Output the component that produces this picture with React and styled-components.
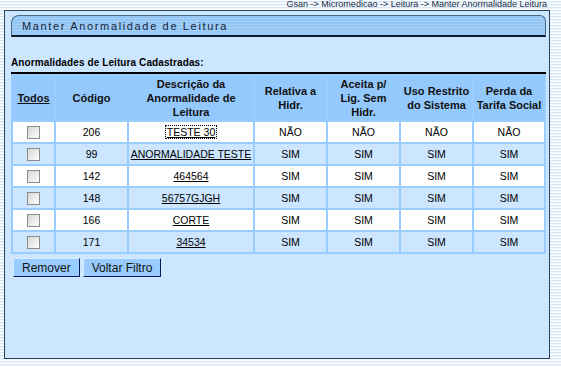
import React from "react";
import styled, { createGlobalStyle } from "styled-components";

const GlobalStyle = createGlobalStyle`
  html, body {
    margin: 0;
    padding: 0;
  }
  body {
    font-family: "Liberation Sans", Arial, sans-serif;
    background: repeating-linear-gradient(
      to bottom,
      #ffffff 0px,
      #ffffff 1px,
      #d3e6f7 1px,
      #d3e6f7 2px,
      #eef5fc 2px,
      #eef5fc 3px
    );
    min-height: 367px;
  }
`;

const Page = styled.div`
  width: 561px;
  height: 367px;
  display: flex;
  flex-direction: column;
`;

const Breadcrumb = styled.div`
  height: 10px;
  line-height: 9px;
  font-size: 9px;
  color: #1c2d44;
  text-align: right;
  padding-right: 14px;
  white-space: nowrap;
  overflow: hidden;
`;

const Panel = styled.div`
  margin-left: 4px;
  width: 546px;
  height: 349px;
  border: 1px solid #2a445e;
  background: #cce6ff;
  padding: 4px 5px 0 6px;
  box-sizing: border-box;
  display: flex;
  flex-direction: column;
  align-items: flex-start;
`;

const TitleBar = styled.div`
  width: 535px;
  height: 22px;
  box-sizing: border-box;
  border: 1px solid #48698a;
  border-bottom: 2px solid #0e1c2a;
  border-radius: 8px 6px 0 0;
  background: repeating-linear-gradient(
    to bottom,
    #93c5f5 0px,
    #93c5f5 2px,
    #a7d0f7 2px,
    #a7d0f7 3px
  );
  display: flex;
  align-items: center;
  padding-left: 10px;
`;

const TitleText = styled.span`
  font-size: 11px;
  letter-spacing: 1.65px;
  color: #16263a;
`;

const SectionLabel = styled.div`
  margin-top: 20px;
  font-size: 10px;
  font-weight: bold;
  letter-spacing: 0.1px;
  line-height: 12px;
  color: #000;
`;

const Rule = styled.div`
  margin-top: 3px;
  width: 535px;
  height: 2px;
  background: #000;
`;

const Table = styled.table`
  width: 535px;
  border-collapse: separate;
  border-spacing: 2px;
  background: #99ccff;
  table-layout: fixed;
  font-size: 10.5px;
`;

const HeadCell = styled.th`
  height: 44px;
  padding: 0;
  background: #94c9fd;
  font-weight: bold;
  font-size: 11px;
  line-height: 14px;
  color: #111;
  text-align: center;
  vertical-align: middle;
  white-space: nowrap;
  text-decoration: ${(p) => (p.$link ? "underline" : "none")};
`;

const Row = styled.tr`
  background: ${(p) => (p.$alt ? "#cce6ff" : "#ffffff")};
`;

const Cell = styled.td`
  height: 20px;
  padding: 0;
  text-align: center;
  vertical-align: middle;
  white-space: nowrap;
  color: #000;
`;

const Check = styled.span`
  display: inline-block;
  width: 11px;
  height: 11px;
  border: 1px solid #8c8c8c;
  background: linear-gradient(135deg, #d6d6d6 0%, #f2f2f2 70%, #fbfbfb 100%);
  vertical-align: middle;
`;

const DescLink = styled.a`
  color: #000;
  text-decoration: underline;
  outline: ${(p) => (p.$focused ? "1px dotted #000" : "none")};
  outline-offset: 0px;
  padding: 0 1px;
`;

const Actions = styled.div`
  margin-top: 4px;
  margin-left: 2px;
  display: flex;
  gap: 3px;
`;

const Button = styled.button`
  height: 19px;
  padding: 0 8px;
  font-family: "Liberation Sans", Arial, sans-serif;
  font-size: 12px;
  color: #111;
  background: #99ccff;
  border: 1px solid;
  border-color: #d9ecff #0b1a5c #0b1a5c #d9ecff;
  line-height: 16px;
  cursor: pointer;
`;

const rows = [
  { code: 206, desc: "TESTE 30", vals: ["NÃO", "NÃO", "NÃO", "NÃO"], focused: true },
  { code: 99, desc: "ANORMALIDADE TESTE", vals: ["SIM", "SIM", "SIM", "SIM"] },
  { code: 142, desc: "464564", vals: ["SIM", "SIM", "SIM", "SIM"] },
  { code: 148, desc: "56757GJGH", vals: ["SIM", "SIM", "SIM", "SIM"] },
  { code: 166, desc: "CORTE", vals: ["SIM", "SIM", "SIM", "SIM"] },
  { code: 171, desc: "34534", vals: ["SIM", "SIM", "SIM", "SIM"] },
];

export default function App() {
  return (
    <>
      <GlobalStyle />
      <Page>
        <Breadcrumb>
          Gsan -&gt; Micromedicao -&gt; Leitura -&gt; Manter Anormalidade Leitura
        </Breadcrumb>
        <Panel>
          <TitleBar>
            <TitleText>Manter Anormalidade de Leitura</TitleText>
          </TitleBar>
          <SectionLabel>Anormalidades de Leitura Cadastradas:</SectionLabel>
          <Rule />
          <Table>
            <colgroup>
              <col style={{ width: 41 }} />
              <col style={{ width: 71 }} />
              <col style={{ width: 124 }} />
              <col style={{ width: 71 }} />
              <col style={{ width: 71 }} />
              <col style={{ width: 71 }} />
              <col style={{ width: 70 }} />
            </colgroup>
            <thead>
              <tr>
                <HeadCell $link>Todos</HeadCell>
                <HeadCell>Código</HeadCell>
                <HeadCell>
                  Descrição da
                  <br />
                  Anormalidade de
                  <br />
                  Leitura
                </HeadCell>
                <HeadCell>
                  Relativa a
                  <br />
                  Hidr.
                </HeadCell>
                <HeadCell>
                  Aceita p/
                  <br />
                  Lig. Sem
                  <br />
                  Hidr.
                </HeadCell>
                <HeadCell>
                  Uso Restrito
                  <br />
                  do Sistema
                </HeadCell>
                <HeadCell>
                  Perda da
                  <br />
                  Tarifa Social
                </HeadCell>
              </tr>
            </thead>
            <tbody>
              {rows.map((r, i) => (
                <Row key={r.code} $alt={i % 2 === 1}>
                  <Cell>
                    <Check />
                  </Cell>
                  <Cell>{r.code}</Cell>
                  <Cell>
                    <DescLink href="#" $focused={r.focused}>
                      {r.desc}
                    </DescLink>
                  </Cell>
                  {r.vals.map((v, j) => (
                    <Cell key={j}>{v}</Cell>
                  ))}
                </Row>
              ))}
            </tbody>
          </Table>
          <Actions>
            <Button>Remover</Button>
            <Button>Voltar Filtro</Button>
          </Actions>
        </Panel>
      </Page>
    </>
  );
}
